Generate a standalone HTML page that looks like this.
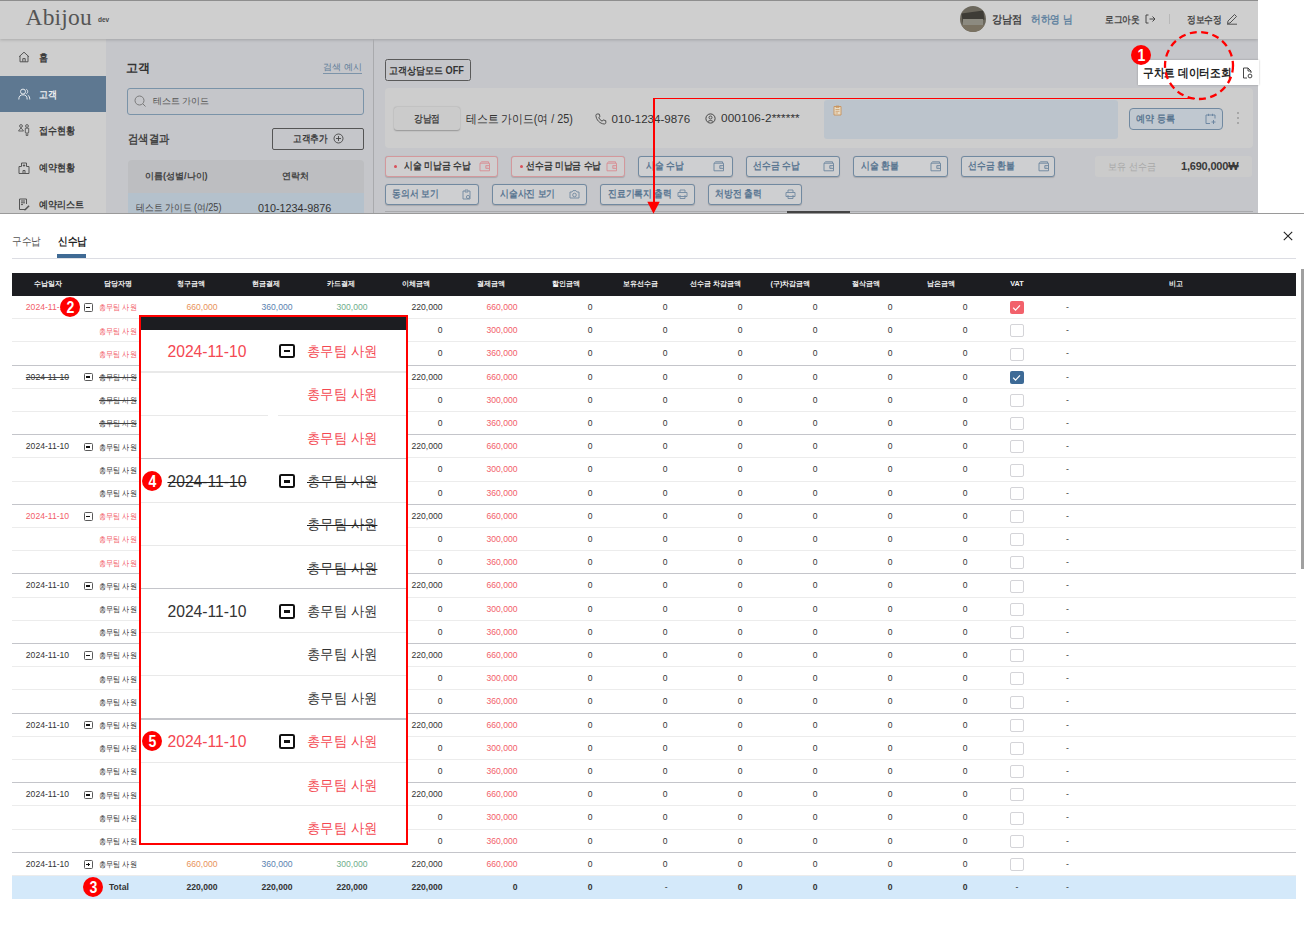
<!DOCTYPE html><html><head><meta charset="utf-8"><style>

*{box-sizing:border-box}
html,body{margin:0;padding:0}
body{width:1304px;height:945px;position:relative;overflow:hidden;background:#fff;font-family:"Liberation Sans",sans-serif;color:#222}
.abs{position:absolute}
.t{position:absolute;white-space:nowrap;line-height:1}
.btn{position:absolute;border:1px solid #7189a0;border-radius:3px;background:#c8cacd;color:#5a7691;font-size:10.5px;font-weight:bold;white-space:nowrap;line-height:1}
.btn span{position:absolute;top:50%;transform:translateY(-50%)}
.row{position:absolute;left:12px;width:1284px;height:23.2px}
.c{position:absolute;top:0;height:23.2px;line-height:23.2px;font-size:8.6px;white-space:nowrap;color:#333}
.r{text-align:right}
.ctr{text-align:center}
.red{color:#f2606a}
.cal .red{color:#f44852}
.org{color:#e8925a}
.blu{color:#5b82b0}
.grn{color:#6fae8c}
.strike{text-decoration:line-through;text-decoration-thickness:0.7px;text-decoration-color:#444}
.badge{position:absolute;width:20px;height:20px;border-radius:50%;background:#ff0000;color:#fff;font-weight:bold;font-size:16px;line-height:22px;text-align:center;font-family:"Liberation Sans",sans-serif}

</style></head><body>
<div class="abs" style="left:0;top:0;width:1258px;height:213px;background:#c5c6ca;overflow:hidden">
<div class="abs" style="left:0;top:39px;width:106px;height:174px;background:#cecece"></div>
<div class="abs" style="left:0;top:76px;width:106px;height:36px;background:#5e7891"></div>
<div class="t" style="left:38.7px;top:52.61px;font-size:10.2px;font-weight:700;color:#3a3a3a;transform:scaleX(0.9);transform-origin:0 0;">홈</div>
<svg class="abs" style="left:18px;top:50.7px" width="13" height="13"><path d="M1 5.8 L6 1.2 L11 5.8 M2 5 V10.8 H10 V5 M4.8 10.8 V7.6 H7.2 V10.8" fill="none" stroke="#555" stroke-width="1" stroke-linejoin="round"/></svg>
<div class="t" style="left:38.7px;top:89.61px;font-size:10.2px;font-weight:700;color:#eef0f2;transform:scaleX(0.9);transform-origin:0 0;">고객</div>
<svg class="abs" style="left:18px;top:87.7px" width="13" height="13"><circle cx="5" cy="3.6" r="2.5" fill="none" stroke="#e6eaee" stroke-width="1"/><path d="M0.8 11.5 C0.8 8 2.5 6.8 5 6.8 C7.5 6.8 9.2 8 9.2 11.5 M8.3 1.3 C10 1.8 10.3 5 8.3 5.8 M9.8 7.2 C11.2 7.8 11.8 9.5 11.8 11.5" fill="none" stroke="#e6eaee" stroke-width="1"/></svg>
<div class="t" style="left:38.7px;top:126.11px;font-size:10.2px;font-weight:700;color:#3a3a3a;transform:scaleX(0.9);transform-origin:0 0;">접수현황</div>
<svg class="abs" style="left:18px;top:124.2px" width="13" height="13"><circle cx="3" cy="2" r="1.4" fill="none" stroke="#555" stroke-width="0.9"/><path d="M0.5 7 L3 3.8 L5.5 7 Z" fill="none" stroke="#555" stroke-width="0.9"/><circle cx="9" cy="2" r="1.4" fill="none" stroke="#555" stroke-width="0.9"/><path d="M7.3 4.2 H10.7 V8.5 H9.8 V11.5 H8.2 V8.5 H7.3 Z" fill="none" stroke="#555" stroke-width="0.9"/></svg>
<div class="t" style="left:38.7px;top:163.41px;font-size:10.2px;font-weight:700;color:#3a3a3a;transform:scaleX(0.9);transform-origin:0 0;">예약현황</div>
<svg class="abs" style="left:18px;top:161.5px" width="13" height="13"><path d="M1 4.5 H3.5 V1 H8.5 V4.5 H11 V11.5 H1 Z M5 11.5 V8.5 H7 V11.5 M6 2.3 V4.7 M4.8 3.5 H7.2" fill="none" stroke="#555" stroke-width="1"/></svg>
<div class="t" style="left:38.7px;top:200.01px;font-size:10.2px;font-weight:700;color:#3a3a3a;transform:scaleX(0.9);transform-origin:0 0;">예약리스트</div>
<svg class="abs" style="left:18px;top:198.1px" width="13" height="13"><path d="M7.5 11.5 H1.5 V1 H8.5 V6 M3 3 H7 M3 4.8 H7 M3 6.6 H5" fill="none" stroke="#555" stroke-width="1"/><path d="M6.5 11.2 L10.5 7.2 L11.6 8.3 L7.6 12.3 L6.3 12.5 Z" fill="#555"/></svg>
<div class="abs" style="left:0;top:0;width:1258px;height:39px;background:#cfcfcf;border-top:1px solid #8e8e8e;box-shadow:0 1px 3px rgba(0,0,0,0.18)"></div>
<div class="t" style="left:25.5px;top:5.9px;font-family:'Liberation Serif',serif;font-size:23.5px;color:#555;letter-spacing:0.2px">Abijou</div>
<div class="t" style="left:98px;top:16.5px;font-size:6.5px;font-weight:bold;color:#4a4a4a">dev</div>
<div class="abs" style="left:960px;top:6px;width:26px;height:26px;border-radius:50%;overflow:hidden;background:#6b675c"><div class="abs" style="left:2px;top:6px;width:22px;height:9px;background:#3e3c36;transform:rotate(-8deg)"></div><div class="abs" style="left:3px;top:13px;width:20px;height:6px;background:#8c8a80"></div><div class="abs" style="left:0;top:19px;width:26px;height:7px;background:#7a7262"></div></div>
<div class="t" style="left:992px;top:13.94px;font-size:11.2px;font-weight:700;color:#454545;transform:scaleX(0.92);transform-origin:0 0;">강남점</div>
<div class="t" style="left:1030.7px;top:14.27px;font-size:10.5px;font-weight:700;color:#6283a0;transform:scaleX(0.88);transform-origin:0 0;">허하영 님</div>
<div class="t" style="left:1105.3px;top:14.60px;font-size:10px;font-weight:700;color:#484848;transform:scaleX(0.87);transform-origin:0 0;">로그아웃</div>
<svg class="abs" style="left:1145px;top:14px" width="11" height="10"><path d="M3.5 1 H1 V9 H3.5 M4.5 5 H10 M7.5 2.5 L10 5 L7.5 7.5" fill="none" stroke="#444" stroke-width="1"/></svg>
<div class="abs" style="left:1169px;top:14px;width:1px;height:10px;background:#b8b8b8"></div>
<div class="t" style="left:1187.3px;top:14.60px;font-size:10px;font-weight:700;color:#484848;transform:scaleX(0.87);transform-origin:0 0;">정보수정</div>
<svg class="abs" style="left:1226px;top:13px" width="12" height="12"><path d="M1.5 10.5 L2 8 L8.5 1.5 L10.5 3.5 L4 10 Z M1 11.2 H11" fill="none" stroke="#444" stroke-width="0.9"/></svg>
<div class="t" style="left:126px;top:62px;font-size:12px;font-weight:bold;color:#333">고객</div>
<div class="t" style="left:323px;top:63px;font-size:9px;color:#5d7c98;border-bottom:1px solid #7c93a8;padding-bottom:1px">검색 예시</div>
<div class="abs" style="left:127px;top:88px;width:236.7px;height:26.5px;border:1px solid #7a93a8;border-radius:3px"></div>
<svg class="abs" style="left:134px;top:95px" width="13" height="13"><circle cx="5.5" cy="5.5" r="4.5" fill="none" stroke="#7a7a7a" stroke-width="1"/><path d="M8.8 8.8 L11.5 11.5" stroke="#7a7a7a" stroke-width="1"/></svg>
<div class="t" style="left:152.5px;top:97px;font-size:9.2px;color:#555">테스트 가이드</div>
<div class="t" style="left:127.5px;top:133.15px;font-size:11.6px;font-weight:700;color:#444;transform:scaleX(0.86);transform-origin:0 0;">검색결과</div>
<div class="abs" style="left:272px;top:127.5px;width:92px;height:22px;border:1px solid #555;border-radius:2px"></div>
<div class="t" style="left:292.5px;top:133.70px;font-size:10px;font-weight:700;color:#3a3a3a;transform:scaleX(0.86);transform-origin:0 0;">고객추가</div>
<svg class="abs" style="left:333px;top:132.5px" width="11" height="11"><circle cx="5.5" cy="5.5" r="4.5" fill="none" stroke="#444" stroke-width="0.9"/><path d="M5.5 3 V8 M3 5.5 H8" stroke="#444" stroke-width="0.9"/></svg>
<div class="abs" style="left:127.5px;top:160px;width:236px;height:33px;background:#bdbec1;border-radius:4px 4px 0 0"></div>
<div class="t" style="left:145px;top:171.5px;font-size:9.2px;font-weight:bold;color:#444">이름(성별/나이)</div>
<div class="t" style="left:281.5px;top:171.5px;font-size:9.2px;font-weight:bold;color:#444">연락처</div>
<div class="abs" style="left:127.5px;top:193px;width:236px;height:22px;background:#b4c1cc"></div>
<div class="t" style="left:136.2px;top:203.11px;font-size:10.4px;font-weight:400;color:#444;transform:scaleX(0.88);transform-origin:0 0;">테스트 가이드 (여/25)</div>
<div class="t" style="left:258px;top:203px;font-size:10.8px;color:#333">010-1234-9876</div>
<div class="abs" style="left:372.5px;top:39px;width:1.2px;height:174px;background:#a9aaad"></div>
<div class="t" style="left:389px;top:65.71px;font-size:10.2px;font-weight:700;color:#333;transform:scaleX(0.9);transform-origin:0 0;">고객상담모드 OFF</div>
<div class="abs" style="left:384.5px;top:58.5px;width:86px;height:22.5px;border:1px solid #5a5a5a;border-radius:2.5px"></div>
<div class="abs" style="left:385px;top:87.5px;width:868px;height:60.5px;background:#cdcdcd;border-radius:4px"></div>
<div class="abs" style="left:394px;top:107px;width:66px;height:23px;background:#cbcbcb;border-radius:3px;box-shadow:0 0.5px 1.5px rgba(0,0,0,0.28)"></div>
<div class="t" style="left:413.5px;top:113.80px;font-size:10px;font-weight:700;color:#444;transform:scaleX(0.87);transform-origin:0 0;">강남점</div>
<div class="t" style="left:466px;top:112.66px;font-size:12px;font-weight:400;color:#333;transform:scaleX(0.9);transform-origin:0 0;">테스트 가이드(여 / 25)</div>
<svg class="abs" style="left:595px;top:112.5px" width="12" height="12"><path d="M2.2 1 L4.2 1 L5 3.6 L3.7 4.6 C4.4 6.2 5.6 7.4 7.2 8.2 L8.2 6.9 L10.8 7.7 L10.8 9.8 C10.8 10.6 10 11 9.2 11 C4.8 10.6 1.2 7 0.9 2.4 C0.9 1.6 1.4 1 2.2 1 Z" fill="none" stroke="#444" stroke-width="0.9"/></svg>
<div class="t" style="left:611.5px;top:112.6px;font-size:11.6px;color:#333">010-1234-9876</div>
<svg class="abs" style="left:704.5px;top:112.5px" width="11" height="11"><circle cx="5.5" cy="5.5" r="4.6" fill="none" stroke="#444" stroke-width="1"/><circle cx="5.5" cy="4.5" r="1.5" fill="none" stroke="#444" stroke-width="0.9"/><path d="M3 8.6 C3.6 7.2 7.4 7.2 8 8.6" fill="none" stroke="#444" stroke-width="0.9"/></svg>
<div class="t" style="left:721px;top:112.6px;font-size:11.8px;color:#333;letter-spacing:0.1px">000106-2******</div>
<div class="abs" style="left:824px;top:100px;width:294px;height:39px;background:#bcc4cc;border-radius:3px"></div>
<svg class="abs" style="left:833px;top:104.5px" width="9" height="11"><path d="M1 1.5 H8 V10 H1 Z" fill="#e8dcc6" stroke="#c8925a" stroke-width="0.9"/><path d="M3 1 H6 V2.5 H3 Z M2.5 4.5 H6.5 M2.5 6.3 H6.5 M2.5 8 H5" fill="none" stroke="#c8925a" stroke-width="0.7"/></svg>
<div class="abs" style="left:1129px;top:107.5px;width:94px;height:22px;border:1px solid #7189a0;border-radius:4px;background:#c0c8d0"></div>
<div class="t" style="left:1136px;top:113.71px;font-size:10.2px;font-weight:700;color:#5a7691;transform:scaleX(0.9);transform-origin:0 0;">예약 등록</div>
<svg class="abs" style="left:1205px;top:112.5px" width="12" height="12"><path d="M5 10.5 H1 V2 H10 V5.5 M3.5 0.8 V3 M7.5 0.8 V3 M8.5 7 V11 M6.5 9 H10.5" fill="none" stroke="#6a85a0" stroke-width="0.95"/></svg>
<div class="abs" style="left:1237px;top:112px;width:2px;height:2px;background:#9a9a9a;border-radius:50%;box-shadow:0 5px 0 #9a9a9a,0 10px 0 #9a9a9a"></div>
<div class="abs" style="left:384.75px;top:155.8px;width:113.25px;height:21px;border:1px solid #d3989c;border-radius:3px;background:#d0cecf;box-shadow:0 0.5px 1px rgba(0,0,0,0.15)"></div>
<div class="t" style="left:403.75px;top:161.41px;font-size:10.4px;font-weight:700;color:#3a3a3a;transform:scaleX(0.875);transform-origin:0 0;">시술 미납금 수납</div>
<svg class="abs" style="left:479px;top:161px" width="12" height="11"><path d="M1 2.2 H10.5 V9.8 H1 Z M1.2 2.2 L2.6 0.8 H9.5 V2.2 M6.8 4.6 H10.5 V7.4 H6.8 Z" fill="none" stroke="#d88f95" stroke-width="0.95"/><circle cx="8" cy="6" r="0.5" fill="#d88f95"/></svg>
<div class="abs" style="left:511.25px;top:155.8px;width:113.5px;height:21px;border:1px solid #d3989c;border-radius:3px;background:#d0cecf;box-shadow:0 0.5px 1px rgba(0,0,0,0.15)"></div>
<div class="t" style="left:525.5px;top:161.41px;font-size:10.4px;font-weight:700;color:#3a3a3a;transform:scaleX(0.875);transform-origin:0 0;">선수금 미납금 수납</div>
<svg class="abs" style="left:605.5px;top:161px" width="12" height="11"><path d="M1 2.2 H10.5 V9.8 H1 Z M1.2 2.2 L2.6 0.8 H9.5 V2.2 M6.8 4.6 H10.5 V7.4 H6.8 Z" fill="none" stroke="#d88f95" stroke-width="0.95"/><circle cx="8" cy="6" r="0.5" fill="#d88f95"/></svg>
<div class="abs" style="left:638px;top:155.8px;width:94.5px;height:21px;border:1px solid #7189a0;border-radius:3px;background:#cecfd1;box-shadow:0 0.5px 1px rgba(0,0,0,0.15)"></div>
<div class="t" style="left:645.5px;top:161.41px;font-size:10.4px;font-weight:700;color:#5a7691;transform:scaleX(0.875);transform-origin:0 0;">시술 수납</div>
<svg class="abs" style="left:713px;top:161px" width="12" height="11"><path d="M1 2.2 H10.5 V9.8 H1 Z M1.2 2.2 L2.6 0.8 H9.5 V2.2 M6.8 4.6 H10.5 V7.4 H6.8 Z" fill="none" stroke="#7189a0" stroke-width="0.95"/><circle cx="8" cy="6" r="0.5" fill="#7189a0"/></svg>
<div class="abs" style="left:745.5px;top:155.8px;width:94.5px;height:21px;border:1px solid #7189a0;border-radius:3px;background:#cecfd1;box-shadow:0 0.5px 1px rgba(0,0,0,0.15)"></div>
<div class="t" style="left:752.5px;top:161.41px;font-size:10.4px;font-weight:700;color:#5a7691;transform:scaleX(0.875);transform-origin:0 0;">선수금 수납</div>
<svg class="abs" style="left:822.5px;top:161px" width="12" height="11"><path d="M1 2.2 H10.5 V9.8 H1 Z M1.2 2.2 L2.6 0.8 H9.5 V2.2 M6.8 4.6 H10.5 V7.4 H6.8 Z" fill="none" stroke="#7189a0" stroke-width="0.95"/><circle cx="8" cy="6" r="0.5" fill="#7189a0"/></svg>
<div class="abs" style="left:853px;top:155.8px;width:94.5px;height:21px;border:1px solid #7189a0;border-radius:3px;background:#cecfd1;box-shadow:0 0.5px 1px rgba(0,0,0,0.15)"></div>
<div class="t" style="left:860.75px;top:161.41px;font-size:10.4px;font-weight:700;color:#5a7691;transform:scaleX(0.875);transform-origin:0 0;">시술 환불</div>
<svg class="abs" style="left:930px;top:161px" width="12" height="11"><path d="M1 2.2 H10.5 V9.8 H1 Z M1.2 2.2 L2.6 0.8 H9.5 V2.2 M6.8 4.6 H10.5 V7.4 H6.8 Z" fill="none" stroke="#7189a0" stroke-width="0.95"/><circle cx="8" cy="6" r="0.5" fill="#7189a0"/></svg>
<div class="abs" style="left:961px;top:155.8px;width:94.40000000000009px;height:21px;border:1px solid #7189a0;border-radius:3px;background:#cecfd1;box-shadow:0 0.5px 1px rgba(0,0,0,0.15)"></div>
<div class="t" style="left:968px;top:161.41px;font-size:10.4px;font-weight:700;color:#5a7691;transform:scaleX(0.875);transform-origin:0 0;">선수금 환불</div>
<svg class="abs" style="left:1038px;top:161px" width="12" height="11"><path d="M1 2.2 H10.5 V9.8 H1 Z M1.2 2.2 L2.6 0.8 H9.5 V2.2 M6.8 4.6 H10.5 V7.4 H6.8 Z" fill="none" stroke="#7189a0" stroke-width="0.95"/><circle cx="8" cy="6" r="0.5" fill="#7189a0"/></svg>
<div class="abs" style="left:394px;top:164.5px;width:3.2px;height:3.2px;border-radius:50%;background:#d9505a"></div>
<div class="abs" style="left:520px;top:164.5px;width:3.2px;height:3.2px;border-radius:50%;background:#d9505a"></div>
<div class="abs" style="left:1095px;top:155.8px;width:157px;height:21px;background:#cbcbcb;border-radius:3px"></div>
<div class="t" style="left:1108px;top:161.60px;font-size:10px;font-weight:400;color:#a8a8a8;transform:scaleX(0.9);transform-origin:0 0;">보유 선수금</div>
<div class="t" style="left:1181px;top:160.7px;font-size:11px;font-weight:bold;color:#3a3a3a;letter-spacing:-0.2px">1,690,000₩</div>
<div class="abs" style="left:385px;top:183.5px;width:93.75px;height:21px;border:1px solid #7189a0;border-radius:3px;background:#cecfd1;box-shadow:0 0.5px 1px rgba(0,0,0,0.15)"></div>
<div class="t" style="left:391.75px;top:189.11px;font-size:10.4px;font-weight:700;color:#5a7691;transform:scaleX(0.875);transform-origin:0 0;">동의서 보기</div>
<svg class="abs" style="left:461.75px;top:189px" width="11" height="11"><path d="M2.5 2 H1 V10 H8 V2 H6.5 M3 1 H6 V3 H3 Z" fill="none" stroke="#7189a0" stroke-width="0.9"/><circle cx="6" cy="8" r="1.6" fill="none" stroke="#7189a0" stroke-width="0.9"/></svg>
<div class="abs" style="left:492.25px;top:183.5px;width:94.5px;height:21px;border:1px solid #7189a0;border-radius:3px;background:#cecfd1;box-shadow:0 0.5px 1px rgba(0,0,0,0.15)"></div>
<div class="t" style="left:499.75px;top:189.11px;font-size:10.4px;font-weight:700;color:#5a7691;transform:scaleX(0.875);transform-origin:0 0;">시술사진 보기</div>
<svg class="abs" style="left:569px;top:189px" width="11" height="11"><path d="M1 3 H3 L4 1.6 H7 L8 3 H10 V9 H1 Z" fill="none" stroke="#7189a0" stroke-width="0.9"/><circle cx="5.5" cy="6" r="1.8" fill="none" stroke="#7189a0" stroke-width="0.9"/></svg>
<div class="abs" style="left:600px;top:183.5px;width:94.75px;height:21px;border:1px solid #7189a0;border-radius:3px;background:#cecfd1;box-shadow:0 0.5px 1px rgba(0,0,0,0.15)"></div>
<div class="t" style="left:607.5px;top:189.11px;font-size:10.4px;font-weight:700;color:#5a7691;transform:scaleX(0.875);transform-origin:0 0;">진료기록지 출력</div>
<svg class="abs" style="left:677px;top:189px" width="11" height="11"><path d="M3 3.5 V1 H8 V3.5 M1 3.5 H10 V7.5 H1 Z M3 6 V9.5 H8 V6" fill="none" stroke="#7189a0" stroke-width="0.9"/></svg>
<div class="abs" style="left:707.5px;top:183.5px;width:94.25px;height:21px;border:1px solid #7189a0;border-radius:3px;background:#cecfd1;box-shadow:0 0.5px 1px rgba(0,0,0,0.15)"></div>
<div class="t" style="left:714.5px;top:189.11px;font-size:10.4px;font-weight:700;color:#5a7691;transform:scaleX(0.875);transform-origin:0 0;">처방전 출력</div>
<svg class="abs" style="left:784.5px;top:189px" width="11" height="11"><path d="M3 3.5 V1 H8 V3.5 M1 3.5 H10 V7.5 H1 Z M3 6 V9.5 H8 V6" fill="none" stroke="#7189a0" stroke-width="0.9"/></svg>
<div class="abs" style="left:385px;top:211px;width:868px;height:1px;background:#a9aaad"></div>
<div class="abs" style="left:787px;top:211px;width:63px;height:2px;background:#444"></div>
</div>
<div class="abs" style="left:0;top:212.5px;width:1304px;height:1px;background:#9a9a9a"></div>
<div class="t" style="left:12px;top:235.87px;font-size:10.5px;font-weight:400;color:#555;transform:scaleX(0.875);transform-origin:0 0;">구수납</div>
<div class="t" style="left:57.5px;top:235.87px;font-size:10.5px;font-weight:700;color:#222;transform:scaleX(0.875);transform-origin:0 0;">신수납</div>
<div class="abs" style="left:12px;top:258.2px;width:1284px;height:1.2px;background:#dcdde3"></div>
<div class="abs" style="left:57px;top:254px;width:29px;height:4px;background:#3f6a94"></div>
<svg class="abs" style="left:1283px;top:230.5px" width="10" height="10"><path d="M0.8 0.8 L9.2 9.2 M9.2 0.8 L0.8 9.2" stroke="#222" stroke-width="1.1"/></svg>
<div class="abs" style="left:1301px;top:269px;width:3px;height:300px;background:#a0a0a0"></div>
<div class="abs" style="left:12px;top:272.8px;width:1284px;height:23.2px;background:#1c1d21"></div>
<div class="t" style="left:-12.5px;width:120px;text-align:center;top:272.10px;line-height:23.2px;font-size:7.3px;font-weight:bold;color:#f4f4f4">수납일자</div>
<div class="t" style="left:58.0px;width:120px;text-align:center;top:272.10px;line-height:23.2px;font-size:7.3px;font-weight:bold;color:#f4f4f4">담당자명</div>
<div class="t" style="left:130.5px;width:120px;text-align:center;top:272.10px;line-height:23.2px;font-size:7.3px;font-weight:bold;color:#f4f4f4">청구금액</div>
<div class="t" style="left:205.5px;width:120px;text-align:center;top:272.10px;line-height:23.2px;font-size:7.3px;font-weight:bold;color:#f4f4f4">현금결제</div>
<div class="t" style="left:280.5px;width:120px;text-align:center;top:272.10px;line-height:23.2px;font-size:7.3px;font-weight:bold;color:#f4f4f4">카드결제</div>
<div class="t" style="left:355.5px;width:120px;text-align:center;top:272.10px;line-height:23.2px;font-size:7.3px;font-weight:bold;color:#f4f4f4">이체금액</div>
<div class="t" style="left:430.5px;width:120px;text-align:center;top:272.10px;line-height:23.2px;font-size:7.3px;font-weight:bold;color:#f4f4f4">결제금액</div>
<div class="t" style="left:505.5px;width:120px;text-align:center;top:272.10px;line-height:23.2px;font-size:7.3px;font-weight:bold;color:#f4f4f4">할인금액</div>
<div class="t" style="left:580.5px;width:120px;text-align:center;top:272.10px;line-height:23.2px;font-size:7.3px;font-weight:bold;color:#f4f4f4">보유선수금</div>
<div class="t" style="left:655.5px;width:120px;text-align:center;top:272.10px;line-height:23.2px;font-size:7.3px;font-weight:bold;color:#f4f4f4">선수금 차감금액</div>
<div class="t" style="left:730.5px;width:120px;text-align:center;top:272.10px;line-height:23.2px;font-size:7.3px;font-weight:bold;color:#f4f4f4">(구)차감금액</div>
<div class="t" style="left:805.5px;width:120px;text-align:center;top:272.10px;line-height:23.2px;font-size:7.3px;font-weight:bold;color:#f4f4f4">절삭금액</div>
<div class="t" style="left:880.5px;width:120px;text-align:center;top:272.10px;line-height:23.2px;font-size:7.3px;font-weight:bold;color:#f4f4f4">남은금액</div>
<div class="t" style="left:957.0px;width:120px;text-align:center;top:272.10px;line-height:23.2px;font-size:7.3px;font-weight:bold;color:#f4f4f4">VAT</div>
<div class="t" style="left:1116.0px;width:120px;text-align:center;top:272.10px;line-height:23.2px;font-size:7.3px;font-weight:bold;color:#f4f4f4">비고</div>
<div class="abs" style="left:12px;top:318.20px;width:1284px;height:1px;background:#ececec"></div>
<div class="c red" style="left:12px;width:71px;text-align:center;top:296.00px;">2024-11-10</div>
<div class="abs" style="left:83.8px;top:303.4px;width:9.2px;height:8.46px;border:1.2px solid #5a5a5a;border-radius:1.38px;background:#fff"></div><div class="abs" style="left:86.47px;top:306.85px;width:3.86px;height:1.56px;background:#111"></div>
<div class="c red" style="left:98.8px;top:296.30px;font-size:8.3px;transform:scaleX(0.89);transform-origin:0 0">총무팀 사원</div>
<div class="c org" style="left:153px;width:64.5px;text-align:right;top:296.00px;">660,000</div>
<div class="c blu" style="left:228px;width:64.5px;text-align:right;top:296.00px;">360,000</div>
<div class="c grn" style="left:303px;width:64.5px;text-align:right;top:296.00px;">300,000</div>
<div class="c " style="left:378px;width:64.5px;text-align:right;top:296.00px;">220,000</div>
<div class="c red" style="left:453px;width:64.5px;text-align:right;top:296.00px;">660,000</div>
<div class="c " style="left:528px;width:64.5px;text-align:right;top:296.00px;">0</div>
<div class="c " style="left:603px;width:64.5px;text-align:right;top:296.00px;">0</div>
<div class="c " style="left:678px;width:64.5px;text-align:right;top:296.00px;">0</div>
<div class="c " style="left:753px;width:64.5px;text-align:right;top:296.00px;">0</div>
<div class="c " style="left:828px;width:64.5px;text-align:right;top:296.00px;">0</div>
<div class="c " style="left:903px;width:64.5px;text-align:right;top:296.00px;">0</div>
<div class="abs" style="left:1010px;top:301.1px;width:13.5px;height:13px;background:#f2616b;border-radius:2px"><svg width="13" height="13" style="position:absolute;left:0;top:0"><path d="M3.2 6.8 L5.6 9.1 L10 4.3" fill="none" stroke="#fff" stroke-width="1.2"/></svg></div>
<div class="c" style="left:1066px;top:296.00px">-</div>
<div class="abs" style="left:12px;top:341.40px;width:1284px;height:1px;background:#ececec"></div>
<div class="c red" style="left:98.8px;top:319.50px;font-size:8.3px;transform:scaleX(0.89);transform-origin:0 0">총무팀 사원</div>
<div class="c " style="left:378px;width:64.5px;text-align:right;top:319.20px;">0</div>
<div class="c red" style="left:453px;width:64.5px;text-align:right;top:319.20px;">300,000</div>
<div class="c " style="left:528px;width:64.5px;text-align:right;top:319.20px;">0</div>
<div class="c " style="left:603px;width:64.5px;text-align:right;top:319.20px;">0</div>
<div class="c " style="left:678px;width:64.5px;text-align:right;top:319.20px;">0</div>
<div class="c " style="left:753px;width:64.5px;text-align:right;top:319.20px;">0</div>
<div class="c " style="left:828px;width:64.5px;text-align:right;top:319.20px;">0</div>
<div class="c " style="left:903px;width:64.5px;text-align:right;top:319.20px;">0</div>
<div class="abs" style="left:1010px;top:324.3px;width:13.5px;height:13px;border:1px solid #d4d4d8;border-radius:2px;background:#fff"></div>
<div class="c" style="left:1066px;top:319.20px">-</div>
<div class="abs" style="left:12px;top:364.50px;width:1284px;height:1.1px;background:#c4c5ca"></div>
<div class="c red" style="left:98.8px;top:342.70px;font-size:8.3px;transform:scaleX(0.89);transform-origin:0 0">총무팀 사원</div>
<div class="c " style="left:378px;width:64.5px;text-align:right;top:342.40px;">0</div>
<div class="c red" style="left:453px;width:64.5px;text-align:right;top:342.40px;">360,000</div>
<div class="c " style="left:528px;width:64.5px;text-align:right;top:342.40px;">0</div>
<div class="c " style="left:603px;width:64.5px;text-align:right;top:342.40px;">0</div>
<div class="c " style="left:678px;width:64.5px;text-align:right;top:342.40px;">0</div>
<div class="c " style="left:753px;width:64.5px;text-align:right;top:342.40px;">0</div>
<div class="c " style="left:828px;width:64.5px;text-align:right;top:342.40px;">0</div>
<div class="c " style="left:903px;width:64.5px;text-align:right;top:342.40px;">0</div>
<div class="abs" style="left:1010px;top:347.5px;width:13.5px;height:13px;border:1px solid #d4d4d8;border-radius:2px;background:#fff"></div>
<div class="c" style="left:1066px;top:342.40px">-</div>
<div class="abs" style="left:12px;top:387.80px;width:1284px;height:1px;background:#ececec"></div>
<div class="c strike" style="left:12px;width:71px;text-align:center;top:365.60px;">2024-11-10</div>
<div class="abs" style="left:83.8px;top:372.99999999999994px;width:9.2px;height:8.46px;border:1.2px solid #5a5a5a;border-radius:1.38px;background:#fff"></div><div class="abs" style="left:86.47px;top:376.45px;width:3.86px;height:1.56px;background:#111"></div>
<div class="c strike" style="left:98.8px;top:365.90px;font-size:8.3px;transform:scaleX(0.89);transform-origin:0 0">총무팀 사원</div>
<div class="c " style="left:378px;width:64.5px;text-align:right;top:365.60px;">220,000</div>
<div class="c red" style="left:453px;width:64.5px;text-align:right;top:365.60px;">660,000</div>
<div class="c " style="left:528px;width:64.5px;text-align:right;top:365.60px;">0</div>
<div class="c " style="left:603px;width:64.5px;text-align:right;top:365.60px;">0</div>
<div class="c " style="left:678px;width:64.5px;text-align:right;top:365.60px;">0</div>
<div class="c " style="left:753px;width:64.5px;text-align:right;top:365.60px;">0</div>
<div class="c " style="left:828px;width:64.5px;text-align:right;top:365.60px;">0</div>
<div class="c " style="left:903px;width:64.5px;text-align:right;top:365.60px;">0</div>
<div class="abs" style="left:1010px;top:370.7px;width:13.5px;height:13px;background:#3d6a96;border-radius:2px"><svg width="13" height="13" style="position:absolute;left:0;top:0"><path d="M3.2 6.8 L5.6 9.1 L10 4.3" fill="none" stroke="#fff" stroke-width="1.2"/></svg></div>
<div class="c" style="left:1066px;top:365.60px">-</div>
<div class="abs" style="left:12px;top:411.00px;width:1284px;height:1px;background:#ececec"></div>
<div class="c strike" style="left:98.8px;top:389.10px;font-size:8.3px;transform:scaleX(0.89);transform-origin:0 0">총무팀 사원</div>
<div class="c " style="left:378px;width:64.5px;text-align:right;top:388.80px;">0</div>
<div class="c red" style="left:453px;width:64.5px;text-align:right;top:388.80px;">300,000</div>
<div class="c " style="left:528px;width:64.5px;text-align:right;top:388.80px;">0</div>
<div class="c " style="left:603px;width:64.5px;text-align:right;top:388.80px;">0</div>
<div class="c " style="left:678px;width:64.5px;text-align:right;top:388.80px;">0</div>
<div class="c " style="left:753px;width:64.5px;text-align:right;top:388.80px;">0</div>
<div class="c " style="left:828px;width:64.5px;text-align:right;top:388.80px;">0</div>
<div class="c " style="left:903px;width:64.5px;text-align:right;top:388.80px;">0</div>
<div class="abs" style="left:1010px;top:393.9px;width:13.5px;height:13px;border:1px solid #d4d4d8;border-radius:2px;background:#fff"></div>
<div class="c" style="left:1066px;top:388.80px">-</div>
<div class="abs" style="left:12px;top:434.10px;width:1284px;height:1.1px;background:#c4c5ca"></div>
<div class="c strike" style="left:98.8px;top:412.30px;font-size:8.3px;transform:scaleX(0.89);transform-origin:0 0">총무팀 사원</div>
<div class="c " style="left:378px;width:64.5px;text-align:right;top:412.00px;">0</div>
<div class="c red" style="left:453px;width:64.5px;text-align:right;top:412.00px;">360,000</div>
<div class="c " style="left:528px;width:64.5px;text-align:right;top:412.00px;">0</div>
<div class="c " style="left:603px;width:64.5px;text-align:right;top:412.00px;">0</div>
<div class="c " style="left:678px;width:64.5px;text-align:right;top:412.00px;">0</div>
<div class="c " style="left:753px;width:64.5px;text-align:right;top:412.00px;">0</div>
<div class="c " style="left:828px;width:64.5px;text-align:right;top:412.00px;">0</div>
<div class="c " style="left:903px;width:64.5px;text-align:right;top:412.00px;">0</div>
<div class="abs" style="left:1010px;top:417.09999999999997px;width:13.5px;height:13px;border:1px solid #d4d4d8;border-radius:2px;background:#fff"></div>
<div class="c" style="left:1066px;top:412.00px">-</div>
<div class="abs" style="left:12px;top:457.40px;width:1284px;height:1px;background:#ececec"></div>
<div class="c " style="left:12px;width:71px;text-align:center;top:435.20px;">2024-11-10</div>
<div class="abs" style="left:83.8px;top:442.5999999999999px;width:9.2px;height:8.46px;border:1.2px solid #5a5a5a;border-radius:1.38px;background:#fff"></div><div class="abs" style="left:86.47px;top:446.05px;width:3.86px;height:1.56px;background:#111"></div>
<div class="c " style="left:98.8px;top:435.50px;font-size:8.3px;transform:scaleX(0.89);transform-origin:0 0">총무팀 사원</div>
<div class="c " style="left:378px;width:64.5px;text-align:right;top:435.20px;">220,000</div>
<div class="c red" style="left:453px;width:64.5px;text-align:right;top:435.20px;">660,000</div>
<div class="c " style="left:528px;width:64.5px;text-align:right;top:435.20px;">0</div>
<div class="c " style="left:603px;width:64.5px;text-align:right;top:435.20px;">0</div>
<div class="c " style="left:678px;width:64.5px;text-align:right;top:435.20px;">0</div>
<div class="c " style="left:753px;width:64.5px;text-align:right;top:435.20px;">0</div>
<div class="c " style="left:828px;width:64.5px;text-align:right;top:435.20px;">0</div>
<div class="c " style="left:903px;width:64.5px;text-align:right;top:435.20px;">0</div>
<div class="abs" style="left:1010px;top:440.29999999999995px;width:13.5px;height:13px;border:1px solid #d4d4d8;border-radius:2px;background:#fff"></div>
<div class="c" style="left:1066px;top:435.20px">-</div>
<div class="abs" style="left:12px;top:480.60px;width:1284px;height:1px;background:#ececec"></div>
<div class="c " style="left:98.8px;top:458.70px;font-size:8.3px;transform:scaleX(0.89);transform-origin:0 0">총무팀 사원</div>
<div class="c " style="left:378px;width:64.5px;text-align:right;top:458.40px;">0</div>
<div class="c red" style="left:453px;width:64.5px;text-align:right;top:458.40px;">300,000</div>
<div class="c " style="left:528px;width:64.5px;text-align:right;top:458.40px;">0</div>
<div class="c " style="left:603px;width:64.5px;text-align:right;top:458.40px;">0</div>
<div class="c " style="left:678px;width:64.5px;text-align:right;top:458.40px;">0</div>
<div class="c " style="left:753px;width:64.5px;text-align:right;top:458.40px;">0</div>
<div class="c " style="left:828px;width:64.5px;text-align:right;top:458.40px;">0</div>
<div class="c " style="left:903px;width:64.5px;text-align:right;top:458.40px;">0</div>
<div class="abs" style="left:1010px;top:463.49999999999994px;width:13.5px;height:13px;border:1px solid #d4d4d8;border-radius:2px;background:#fff"></div>
<div class="c" style="left:1066px;top:458.40px">-</div>
<div class="abs" style="left:12px;top:503.70px;width:1284px;height:1.1px;background:#c4c5ca"></div>
<div class="c " style="left:98.8px;top:481.90px;font-size:8.3px;transform:scaleX(0.89);transform-origin:0 0">총무팀 사원</div>
<div class="c " style="left:378px;width:64.5px;text-align:right;top:481.60px;">0</div>
<div class="c red" style="left:453px;width:64.5px;text-align:right;top:481.60px;">360,000</div>
<div class="c " style="left:528px;width:64.5px;text-align:right;top:481.60px;">0</div>
<div class="c " style="left:603px;width:64.5px;text-align:right;top:481.60px;">0</div>
<div class="c " style="left:678px;width:64.5px;text-align:right;top:481.60px;">0</div>
<div class="c " style="left:753px;width:64.5px;text-align:right;top:481.60px;">0</div>
<div class="c " style="left:828px;width:64.5px;text-align:right;top:481.60px;">0</div>
<div class="c " style="left:903px;width:64.5px;text-align:right;top:481.60px;">0</div>
<div class="abs" style="left:1010px;top:486.69999999999993px;width:13.5px;height:13px;border:1px solid #d4d4d8;border-radius:2px;background:#fff"></div>
<div class="c" style="left:1066px;top:481.60px">-</div>
<div class="abs" style="left:12px;top:527.00px;width:1284px;height:1px;background:#ececec"></div>
<div class="c red" style="left:12px;width:71px;text-align:center;top:504.80px;">2024-11-10</div>
<div class="abs" style="left:83.8px;top:512.1999999999999px;width:9.2px;height:8.46px;border:1.2px solid #5a5a5a;border-radius:1.38px;background:#fff"></div><div class="abs" style="left:86.47px;top:515.65px;width:3.86px;height:1.56px;background:#111"></div>
<div class="c red" style="left:98.8px;top:505.10px;font-size:8.3px;transform:scaleX(0.89);transform-origin:0 0">총무팀 사원</div>
<div class="c " style="left:378px;width:64.5px;text-align:right;top:504.80px;">220,000</div>
<div class="c red" style="left:453px;width:64.5px;text-align:right;top:504.80px;">660,000</div>
<div class="c " style="left:528px;width:64.5px;text-align:right;top:504.80px;">0</div>
<div class="c " style="left:603px;width:64.5px;text-align:right;top:504.80px;">0</div>
<div class="c " style="left:678px;width:64.5px;text-align:right;top:504.80px;">0</div>
<div class="c " style="left:753px;width:64.5px;text-align:right;top:504.80px;">0</div>
<div class="c " style="left:828px;width:64.5px;text-align:right;top:504.80px;">0</div>
<div class="c " style="left:903px;width:64.5px;text-align:right;top:504.80px;">0</div>
<div class="abs" style="left:1010px;top:509.8999999999999px;width:13.5px;height:13px;border:1px solid #d4d4d8;border-radius:2px;background:#fff"></div>
<div class="c" style="left:1066px;top:504.80px">-</div>
<div class="abs" style="left:12px;top:550.20px;width:1284px;height:1px;background:#ececec"></div>
<div class="c red" style="left:98.8px;top:528.30px;font-size:8.3px;transform:scaleX(0.89);transform-origin:0 0">총무팀 사원</div>
<div class="c " style="left:378px;width:64.5px;text-align:right;top:528.00px;">0</div>
<div class="c red" style="left:453px;width:64.5px;text-align:right;top:528.00px;">300,000</div>
<div class="c " style="left:528px;width:64.5px;text-align:right;top:528.00px;">0</div>
<div class="c " style="left:603px;width:64.5px;text-align:right;top:528.00px;">0</div>
<div class="c " style="left:678px;width:64.5px;text-align:right;top:528.00px;">0</div>
<div class="c " style="left:753px;width:64.5px;text-align:right;top:528.00px;">0</div>
<div class="c " style="left:828px;width:64.5px;text-align:right;top:528.00px;">0</div>
<div class="c " style="left:903px;width:64.5px;text-align:right;top:528.00px;">0</div>
<div class="abs" style="left:1010px;top:533.0999999999999px;width:13.5px;height:13px;border:1px solid #d4d4d8;border-radius:2px;background:#fff"></div>
<div class="c" style="left:1066px;top:528.00px">-</div>
<div class="abs" style="left:12px;top:573.30px;width:1284px;height:1.1px;background:#c4c5ca"></div>
<div class="c red" style="left:98.8px;top:551.50px;font-size:8.3px;transform:scaleX(0.89);transform-origin:0 0">총무팀 사원</div>
<div class="c " style="left:378px;width:64.5px;text-align:right;top:551.20px;">0</div>
<div class="c red" style="left:453px;width:64.5px;text-align:right;top:551.20px;">360,000</div>
<div class="c " style="left:528px;width:64.5px;text-align:right;top:551.20px;">0</div>
<div class="c " style="left:603px;width:64.5px;text-align:right;top:551.20px;">0</div>
<div class="c " style="left:678px;width:64.5px;text-align:right;top:551.20px;">0</div>
<div class="c " style="left:753px;width:64.5px;text-align:right;top:551.20px;">0</div>
<div class="c " style="left:828px;width:64.5px;text-align:right;top:551.20px;">0</div>
<div class="c " style="left:903px;width:64.5px;text-align:right;top:551.20px;">0</div>
<div class="abs" style="left:1010px;top:556.3px;width:13.5px;height:13px;border:1px solid #d4d4d8;border-radius:2px;background:#fff"></div>
<div class="c" style="left:1066px;top:551.20px">-</div>
<div class="abs" style="left:12px;top:596.60px;width:1284px;height:1px;background:#ececec"></div>
<div class="c " style="left:12px;width:71px;text-align:center;top:574.40px;">2024-11-10</div>
<div class="abs" style="left:83.8px;top:581.8px;width:9.2px;height:8.46px;border:1.2px solid #5a5a5a;border-radius:1.38px;background:#fff"></div><div class="abs" style="left:86.47px;top:585.25px;width:3.86px;height:1.56px;background:#111"></div>
<div class="c " style="left:98.8px;top:574.70px;font-size:8.3px;transform:scaleX(0.89);transform-origin:0 0">총무팀 사원</div>
<div class="c " style="left:378px;width:64.5px;text-align:right;top:574.40px;">220,000</div>
<div class="c red" style="left:453px;width:64.5px;text-align:right;top:574.40px;">660,000</div>
<div class="c " style="left:528px;width:64.5px;text-align:right;top:574.40px;">0</div>
<div class="c " style="left:603px;width:64.5px;text-align:right;top:574.40px;">0</div>
<div class="c " style="left:678px;width:64.5px;text-align:right;top:574.40px;">0</div>
<div class="c " style="left:753px;width:64.5px;text-align:right;top:574.40px;">0</div>
<div class="c " style="left:828px;width:64.5px;text-align:right;top:574.40px;">0</div>
<div class="c " style="left:903px;width:64.5px;text-align:right;top:574.40px;">0</div>
<div class="abs" style="left:1010px;top:579.5px;width:13.5px;height:13px;border:1px solid #d4d4d8;border-radius:2px;background:#fff"></div>
<div class="c" style="left:1066px;top:574.40px">-</div>
<div class="abs" style="left:12px;top:619.80px;width:1284px;height:1px;background:#ececec"></div>
<div class="c " style="left:98.8px;top:597.90px;font-size:8.3px;transform:scaleX(0.89);transform-origin:0 0">총무팀 사원</div>
<div class="c " style="left:378px;width:64.5px;text-align:right;top:597.60px;">0</div>
<div class="c red" style="left:453px;width:64.5px;text-align:right;top:597.60px;">300,000</div>
<div class="c " style="left:528px;width:64.5px;text-align:right;top:597.60px;">0</div>
<div class="c " style="left:603px;width:64.5px;text-align:right;top:597.60px;">0</div>
<div class="c " style="left:678px;width:64.5px;text-align:right;top:597.60px;">0</div>
<div class="c " style="left:753px;width:64.5px;text-align:right;top:597.60px;">0</div>
<div class="c " style="left:828px;width:64.5px;text-align:right;top:597.60px;">0</div>
<div class="c " style="left:903px;width:64.5px;text-align:right;top:597.60px;">0</div>
<div class="abs" style="left:1010px;top:602.7px;width:13.5px;height:13px;border:1px solid #d4d4d8;border-radius:2px;background:#fff"></div>
<div class="c" style="left:1066px;top:597.60px">-</div>
<div class="abs" style="left:12px;top:642.90px;width:1284px;height:1.1px;background:#c4c5ca"></div>
<div class="c " style="left:98.8px;top:621.10px;font-size:8.3px;transform:scaleX(0.89);transform-origin:0 0">총무팀 사원</div>
<div class="c " style="left:378px;width:64.5px;text-align:right;top:620.80px;">0</div>
<div class="c red" style="left:453px;width:64.5px;text-align:right;top:620.80px;">360,000</div>
<div class="c " style="left:528px;width:64.5px;text-align:right;top:620.80px;">0</div>
<div class="c " style="left:603px;width:64.5px;text-align:right;top:620.80px;">0</div>
<div class="c " style="left:678px;width:64.5px;text-align:right;top:620.80px;">0</div>
<div class="c " style="left:753px;width:64.5px;text-align:right;top:620.80px;">0</div>
<div class="c " style="left:828px;width:64.5px;text-align:right;top:620.80px;">0</div>
<div class="c " style="left:903px;width:64.5px;text-align:right;top:620.80px;">0</div>
<div class="abs" style="left:1010px;top:625.9000000000001px;width:13.5px;height:13px;border:1px solid #d4d4d8;border-radius:2px;background:#fff"></div>
<div class="c" style="left:1066px;top:620.80px">-</div>
<div class="abs" style="left:12px;top:666.20px;width:1284px;height:1px;background:#ececec"></div>
<div class="c " style="left:12px;width:71px;text-align:center;top:644.00px;">2024-11-10</div>
<div class="abs" style="left:83.8px;top:651.4000000000001px;width:9.2px;height:8.46px;border:1.2px solid #5a5a5a;border-radius:1.38px;background:#fff"></div><div class="abs" style="left:86.47px;top:654.85px;width:3.86px;height:1.56px;background:#111"></div>
<div class="c " style="left:98.8px;top:644.30px;font-size:8.3px;transform:scaleX(0.89);transform-origin:0 0">총무팀 사원</div>
<div class="c " style="left:378px;width:64.5px;text-align:right;top:644.00px;">220,000</div>
<div class="c red" style="left:453px;width:64.5px;text-align:right;top:644.00px;">660,000</div>
<div class="c " style="left:528px;width:64.5px;text-align:right;top:644.00px;">0</div>
<div class="c " style="left:603px;width:64.5px;text-align:right;top:644.00px;">0</div>
<div class="c " style="left:678px;width:64.5px;text-align:right;top:644.00px;">0</div>
<div class="c " style="left:753px;width:64.5px;text-align:right;top:644.00px;">0</div>
<div class="c " style="left:828px;width:64.5px;text-align:right;top:644.00px;">0</div>
<div class="c " style="left:903px;width:64.5px;text-align:right;top:644.00px;">0</div>
<div class="abs" style="left:1010px;top:649.1000000000001px;width:13.5px;height:13px;border:1px solid #d4d4d8;border-radius:2px;background:#fff"></div>
<div class="c" style="left:1066px;top:644.00px">-</div>
<div class="abs" style="left:12px;top:689.40px;width:1284px;height:1px;background:#ececec"></div>
<div class="c " style="left:98.8px;top:667.50px;font-size:8.3px;transform:scaleX(0.89);transform-origin:0 0">총무팀 사원</div>
<div class="c " style="left:378px;width:64.5px;text-align:right;top:667.20px;">0</div>
<div class="c red" style="left:453px;width:64.5px;text-align:right;top:667.20px;">300,000</div>
<div class="c " style="left:528px;width:64.5px;text-align:right;top:667.20px;">0</div>
<div class="c " style="left:603px;width:64.5px;text-align:right;top:667.20px;">0</div>
<div class="c " style="left:678px;width:64.5px;text-align:right;top:667.20px;">0</div>
<div class="c " style="left:753px;width:64.5px;text-align:right;top:667.20px;">0</div>
<div class="c " style="left:828px;width:64.5px;text-align:right;top:667.20px;">0</div>
<div class="c " style="left:903px;width:64.5px;text-align:right;top:667.20px;">0</div>
<div class="abs" style="left:1010px;top:672.3000000000002px;width:13.5px;height:13px;border:1px solid #d4d4d8;border-radius:2px;background:#fff"></div>
<div class="c" style="left:1066px;top:667.20px">-</div>
<div class="abs" style="left:12px;top:712.50px;width:1284px;height:1.1px;background:#c4c5ca"></div>
<div class="c " style="left:98.8px;top:690.70px;font-size:8.3px;transform:scaleX(0.89);transform-origin:0 0">총무팀 사원</div>
<div class="c " style="left:378px;width:64.5px;text-align:right;top:690.40px;">0</div>
<div class="c red" style="left:453px;width:64.5px;text-align:right;top:690.40px;">360,000</div>
<div class="c " style="left:528px;width:64.5px;text-align:right;top:690.40px;">0</div>
<div class="c " style="left:603px;width:64.5px;text-align:right;top:690.40px;">0</div>
<div class="c " style="left:678px;width:64.5px;text-align:right;top:690.40px;">0</div>
<div class="c " style="left:753px;width:64.5px;text-align:right;top:690.40px;">0</div>
<div class="c " style="left:828px;width:64.5px;text-align:right;top:690.40px;">0</div>
<div class="c " style="left:903px;width:64.5px;text-align:right;top:690.40px;">0</div>
<div class="abs" style="left:1010px;top:695.5000000000002px;width:13.5px;height:13px;border:1px solid #d4d4d8;border-radius:2px;background:#fff"></div>
<div class="c" style="left:1066px;top:690.40px">-</div>
<div class="abs" style="left:12px;top:735.80px;width:1284px;height:1px;background:#ececec"></div>
<div class="c " style="left:12px;width:71px;text-align:center;top:713.60px;">2024-11-10</div>
<div class="abs" style="left:83.8px;top:721.0000000000002px;width:9.2px;height:8.46px;border:1.2px solid #5a5a5a;border-radius:1.38px;background:#fff"></div><div class="abs" style="left:86.47px;top:724.45px;width:3.86px;height:1.56px;background:#111"></div>
<div class="c " style="left:98.8px;top:713.90px;font-size:8.3px;transform:scaleX(0.89);transform-origin:0 0">총무팀 사원</div>
<div class="c " style="left:378px;width:64.5px;text-align:right;top:713.60px;">220,000</div>
<div class="c red" style="left:453px;width:64.5px;text-align:right;top:713.60px;">660,000</div>
<div class="c " style="left:528px;width:64.5px;text-align:right;top:713.60px;">0</div>
<div class="c " style="left:603px;width:64.5px;text-align:right;top:713.60px;">0</div>
<div class="c " style="left:678px;width:64.5px;text-align:right;top:713.60px;">0</div>
<div class="c " style="left:753px;width:64.5px;text-align:right;top:713.60px;">0</div>
<div class="c " style="left:828px;width:64.5px;text-align:right;top:713.60px;">0</div>
<div class="c " style="left:903px;width:64.5px;text-align:right;top:713.60px;">0</div>
<div class="abs" style="left:1010px;top:718.7000000000003px;width:13.5px;height:13px;border:1px solid #d4d4d8;border-radius:2px;background:#fff"></div>
<div class="c" style="left:1066px;top:713.60px">-</div>
<div class="abs" style="left:12px;top:759.00px;width:1284px;height:1px;background:#ececec"></div>
<div class="c " style="left:98.8px;top:737.10px;font-size:8.3px;transform:scaleX(0.89);transform-origin:0 0">총무팀 사원</div>
<div class="c " style="left:378px;width:64.5px;text-align:right;top:736.80px;">0</div>
<div class="c red" style="left:453px;width:64.5px;text-align:right;top:736.80px;">300,000</div>
<div class="c " style="left:528px;width:64.5px;text-align:right;top:736.80px;">0</div>
<div class="c " style="left:603px;width:64.5px;text-align:right;top:736.80px;">0</div>
<div class="c " style="left:678px;width:64.5px;text-align:right;top:736.80px;">0</div>
<div class="c " style="left:753px;width:64.5px;text-align:right;top:736.80px;">0</div>
<div class="c " style="left:828px;width:64.5px;text-align:right;top:736.80px;">0</div>
<div class="c " style="left:903px;width:64.5px;text-align:right;top:736.80px;">0</div>
<div class="abs" style="left:1010px;top:741.9000000000003px;width:13.5px;height:13px;border:1px solid #d4d4d8;border-radius:2px;background:#fff"></div>
<div class="c" style="left:1066px;top:736.80px">-</div>
<div class="abs" style="left:12px;top:782.10px;width:1284px;height:1.1px;background:#c4c5ca"></div>
<div class="c " style="left:98.8px;top:760.30px;font-size:8.3px;transform:scaleX(0.89);transform-origin:0 0">총무팀 사원</div>
<div class="c " style="left:378px;width:64.5px;text-align:right;top:760.00px;">0</div>
<div class="c red" style="left:453px;width:64.5px;text-align:right;top:760.00px;">360,000</div>
<div class="c " style="left:528px;width:64.5px;text-align:right;top:760.00px;">0</div>
<div class="c " style="left:603px;width:64.5px;text-align:right;top:760.00px;">0</div>
<div class="c " style="left:678px;width:64.5px;text-align:right;top:760.00px;">0</div>
<div class="c " style="left:753px;width:64.5px;text-align:right;top:760.00px;">0</div>
<div class="c " style="left:828px;width:64.5px;text-align:right;top:760.00px;">0</div>
<div class="c " style="left:903px;width:64.5px;text-align:right;top:760.00px;">0</div>
<div class="abs" style="left:1010px;top:765.1000000000004px;width:13.5px;height:13px;border:1px solid #d4d4d8;border-radius:2px;background:#fff"></div>
<div class="c" style="left:1066px;top:760.00px">-</div>
<div class="abs" style="left:12px;top:805.40px;width:1284px;height:1px;background:#ececec"></div>
<div class="c " style="left:12px;width:71px;text-align:center;top:783.20px;">2024-11-10</div>
<div class="abs" style="left:83.8px;top:790.6000000000004px;width:9.2px;height:8.46px;border:1.2px solid #5a5a5a;border-radius:1.38px;background:#fff"></div><div class="abs" style="left:86.47px;top:794.05px;width:3.86px;height:1.56px;background:#111"></div>
<div class="c " style="left:98.8px;top:783.50px;font-size:8.3px;transform:scaleX(0.89);transform-origin:0 0">총무팀 사원</div>
<div class="c " style="left:378px;width:64.5px;text-align:right;top:783.20px;">220,000</div>
<div class="c red" style="left:453px;width:64.5px;text-align:right;top:783.20px;">660,000</div>
<div class="c " style="left:528px;width:64.5px;text-align:right;top:783.20px;">0</div>
<div class="c " style="left:603px;width:64.5px;text-align:right;top:783.20px;">0</div>
<div class="c " style="left:678px;width:64.5px;text-align:right;top:783.20px;">0</div>
<div class="c " style="left:753px;width:64.5px;text-align:right;top:783.20px;">0</div>
<div class="c " style="left:828px;width:64.5px;text-align:right;top:783.20px;">0</div>
<div class="c " style="left:903px;width:64.5px;text-align:right;top:783.20px;">0</div>
<div class="abs" style="left:1010px;top:788.3000000000004px;width:13.5px;height:13px;border:1px solid #d4d4d8;border-radius:2px;background:#fff"></div>
<div class="c" style="left:1066px;top:783.20px">-</div>
<div class="abs" style="left:12px;top:828.60px;width:1284px;height:1px;background:#ececec"></div>
<div class="c " style="left:98.8px;top:806.70px;font-size:8.3px;transform:scaleX(0.89);transform-origin:0 0">총무팀 사원</div>
<div class="c " style="left:378px;width:64.5px;text-align:right;top:806.40px;">0</div>
<div class="c red" style="left:453px;width:64.5px;text-align:right;top:806.40px;">300,000</div>
<div class="c " style="left:528px;width:64.5px;text-align:right;top:806.40px;">0</div>
<div class="c " style="left:603px;width:64.5px;text-align:right;top:806.40px;">0</div>
<div class="c " style="left:678px;width:64.5px;text-align:right;top:806.40px;">0</div>
<div class="c " style="left:753px;width:64.5px;text-align:right;top:806.40px;">0</div>
<div class="c " style="left:828px;width:64.5px;text-align:right;top:806.40px;">0</div>
<div class="c " style="left:903px;width:64.5px;text-align:right;top:806.40px;">0</div>
<div class="abs" style="left:1010px;top:811.5000000000005px;width:13.5px;height:13px;border:1px solid #d4d4d8;border-radius:2px;background:#fff"></div>
<div class="c" style="left:1066px;top:806.40px">-</div>
<div class="abs" style="left:12px;top:851.70px;width:1284px;height:1.1px;background:#c4c5ca"></div>
<div class="c " style="left:98.8px;top:829.90px;font-size:8.3px;transform:scaleX(0.89);transform-origin:0 0">총무팀 사원</div>
<div class="c " style="left:378px;width:64.5px;text-align:right;top:829.60px;">0</div>
<div class="c red" style="left:453px;width:64.5px;text-align:right;top:829.60px;">360,000</div>
<div class="c " style="left:528px;width:64.5px;text-align:right;top:829.60px;">0</div>
<div class="c " style="left:603px;width:64.5px;text-align:right;top:829.60px;">0</div>
<div class="c " style="left:678px;width:64.5px;text-align:right;top:829.60px;">0</div>
<div class="c " style="left:753px;width:64.5px;text-align:right;top:829.60px;">0</div>
<div class="c " style="left:828px;width:64.5px;text-align:right;top:829.60px;">0</div>
<div class="c " style="left:903px;width:64.5px;text-align:right;top:829.60px;">0</div>
<div class="abs" style="left:1010px;top:834.7000000000005px;width:13.5px;height:13px;border:1px solid #d4d4d8;border-radius:2px;background:#fff"></div>
<div class="c" style="left:1066px;top:829.60px">-</div>
<div class="abs" style="left:12px;top:875.00px;width:1284px;height:1px;background:#ececec"></div>
<div class="c " style="left:12px;width:71px;text-align:center;top:852.80px;">2024-11-10</div>
<div class="abs" style="left:83.8px;top:860.2000000000005px;width:9.2px;height:8.46px;border:1.2px solid #5a5a5a;border-radius:1.38px;background:#fff"></div><div class="abs" style="left:86.47px;top:863.65px;width:3.86px;height:1.56px;background:#111"></div><div class="abs" style="left:87.62px;top:862.50px;width:1.56px;height:3.86px;background:#111"></div>
<div class="c" style="left:98.8px;top:853.10px;font-size:8.3px;transform:scaleX(0.89);transform-origin:0 0">총무팀 사원</div>
<div class="c org" style="left:153px;width:64.5px;text-align:right;top:852.80px;">660,000</div>
<div class="c blu" style="left:228px;width:64.5px;text-align:right;top:852.80px;">360,000</div>
<div class="c grn" style="left:303px;width:64.5px;text-align:right;top:852.80px;">300,000</div>
<div class="c " style="left:378px;width:64.5px;text-align:right;top:852.80px;">220,000</div>
<div class="c red" style="left:453px;width:64.5px;text-align:right;top:852.80px;">660,000</div>
<div class="c " style="left:528px;width:64.5px;text-align:right;top:852.80px;">0</div>
<div class="c " style="left:603px;width:64.5px;text-align:right;top:852.80px;">0</div>
<div class="c " style="left:678px;width:64.5px;text-align:right;top:852.80px;">0</div>
<div class="c " style="left:753px;width:64.5px;text-align:right;top:852.80px;">0</div>
<div class="c " style="left:828px;width:64.5px;text-align:right;top:852.80px;">0</div>
<div class="c " style="left:903px;width:64.5px;text-align:right;top:852.80px;">0</div>
<div class="abs" style="left:1010px;top:857.9000000000005px;width:13.5px;height:13px;border:1px solid #d4d4d8;border-radius:2px;background:#fff"></div>
<div class="c" style="left:1066px;top:852.80px">-</div>
<div class="abs" style="left:12px;top:876.00px;width:1284px;height:23.2px;background:#d4e9fa"></div>
<div class="c" style="left:109px;top:876.00px;font-weight:bold">Total</div>
<div class="c " style="left:153px;width:64.5px;text-align:right;top:876.00px;font-weight:bold;">220,000</div>
<div class="c " style="left:228px;width:64.5px;text-align:right;top:876.00px;font-weight:bold;">220,000</div>
<div class="c " style="left:303px;width:64.5px;text-align:right;top:876.00px;font-weight:bold;">220,000</div>
<div class="c " style="left:378px;width:64.5px;text-align:right;top:876.00px;font-weight:bold;">220,000</div>
<div class="c " style="left:453px;width:64.5px;text-align:right;top:876.00px;font-weight:bold;">0</div>
<div class="c " style="left:528px;width:64.5px;text-align:right;top:876.00px;font-weight:bold;">0</div>
<div class="c " style="left:603px;width:64.5px;text-align:right;top:876.00px;">-</div>
<div class="c " style="left:678px;width:64.5px;text-align:right;top:876.00px;font-weight:bold;">0</div>
<div class="c " style="left:753px;width:64.5px;text-align:right;top:876.00px;font-weight:bold;">0</div>
<div class="c " style="left:828px;width:64.5px;text-align:right;top:876.00px;font-weight:bold;">0</div>
<div class="c " style="left:903px;width:64.5px;text-align:right;top:876.00px;font-weight:bold;">0</div>
<div class="c " style="left:978px;width:78px;text-align:center;top:876.00px;">-</div>
<div class="c" style="left:1066px;top:876.00px">-</div>
<div class="abs cal" style="left:139.3px;top:315.2px;width:268.3px;height:530.0px;border:2px solid #ff0000;background:#fff;overflow:hidden">
<div class="abs" style="left:0;top:0;width:100%;height:13px;background:#1c1d21"></div>
<div class="abs" style="left:0;top:54.27px;width:100%;height:1.2px;background:#e9e9e9"></div>
<div class="c red" style="left:0px;width:131.39999999999998px;text-align:center;top:12.70px;height:43.37px;line-height:43.37px;font-size:15.7px;text-decoration-thickness:1.3px;text-decoration-color:#222">2024-11-10</div>
<div class="abs" style="left:138.09999999999997px;top:26.785000000000025px;width:15.6px;height:14.35px;border:2px solid #111;border-radius:2.34px;background:#fff"></div><div class="abs" style="left:142.62px;top:32.66px;width:6.55px;height:2.60px;background:#111"></div>
<div class="c red" style="left:165.7px;top:12.70px;height:43.37px;line-height:43.37px;font-size:13.5px;transform:scaleX(0.955);transform-origin:0 0;text-decoration-thickness:1.3px;text-decoration-color:#222">총무팀 사원</div>
<div class="abs" style="left:0;top:97.64px;width:100%;height:1.2px;background:#e9e9e9"></div>
<div class="c red" style="left:165.7px;top:56.07px;height:43.37px;line-height:43.37px;font-size:13.5px;transform:scaleX(0.955);transform-origin:0 0;text-decoration-thickness:1.3px;text-decoration-color:#222">총무팀 사원</div>
<div class="abs" style="left:0;top:140.51px;width:100%;height:1.7px;background:#c4c5ca"></div>
<div class="c red" style="left:165.7px;top:99.44px;height:43.37px;line-height:43.37px;font-size:13.5px;transform:scaleX(0.955);transform-origin:0 0;text-decoration-thickness:1.3px;text-decoration-color:#222">총무팀 사원</div>
<div class="abs" style="left:0;top:184.38px;width:100%;height:1.2px;background:#e9e9e9"></div>
<div class="c strike" style="left:0px;width:131.39999999999998px;text-align:center;top:142.81px;height:43.37px;line-height:43.37px;font-size:15.7px;text-decoration-thickness:1.3px;text-decoration-color:#222">2024-11-10</div>
<div class="abs" style="left:138.09999999999997px;top:156.895px;width:15.6px;height:14.35px;border:2px solid #111;border-radius:2.34px;background:#fff"></div><div class="abs" style="left:142.62px;top:162.77px;width:6.55px;height:2.60px;background:#111"></div>
<div class="c strike" style="left:165.7px;top:142.81px;height:43.37px;line-height:43.37px;font-size:13.5px;transform:scaleX(0.955);transform-origin:0 0;text-decoration-thickness:1.3px;text-decoration-color:#222">총무팀 사원</div>
<div class="abs" style="left:0;top:227.75px;width:100%;height:1.2px;background:#e9e9e9"></div>
<div class="c strike" style="left:165.7px;top:186.18px;height:43.37px;line-height:43.37px;font-size:13.5px;transform:scaleX(0.955);transform-origin:0 0;text-decoration-thickness:1.3px;text-decoration-color:#222">총무팀 사원</div>
<div class="abs" style="left:0;top:270.62px;width:100%;height:1.7px;background:#c4c5ca"></div>
<div class="c strike" style="left:165.7px;top:229.55px;height:43.37px;line-height:43.37px;font-size:13.5px;transform:scaleX(0.955);transform-origin:0 0;text-decoration-thickness:1.3px;text-decoration-color:#222">총무팀 사원</div>
<div class="abs" style="left:0;top:314.49px;width:100%;height:1.2px;background:#e9e9e9"></div>
<div class="c " style="left:0px;width:131.39999999999998px;text-align:center;top:272.92px;height:43.37px;line-height:43.37px;font-size:15.7px;text-decoration-thickness:1.3px;text-decoration-color:#222">2024-11-10</div>
<div class="abs" style="left:138.09999999999997px;top:287.005px;width:15.6px;height:14.35px;border:2px solid #111;border-radius:2.34px;background:#fff"></div><div class="abs" style="left:142.62px;top:292.88px;width:6.55px;height:2.60px;background:#111"></div>
<div class="c " style="left:165.7px;top:272.92px;height:43.37px;line-height:43.37px;font-size:13.5px;transform:scaleX(0.955);transform-origin:0 0;text-decoration-thickness:1.3px;text-decoration-color:#222">총무팀 사원</div>
<div class="abs" style="left:0;top:357.86px;width:100%;height:1.2px;background:#e9e9e9"></div>
<div class="c " style="left:165.7px;top:316.29px;height:43.37px;line-height:43.37px;font-size:13.5px;transform:scaleX(0.955);transform-origin:0 0;text-decoration-thickness:1.3px;text-decoration-color:#222">총무팀 사원</div>
<div class="abs" style="left:0;top:400.73px;width:100%;height:1.7px;background:#c4c5ca"></div>
<div class="c " style="left:165.7px;top:359.66px;height:43.37px;line-height:43.37px;font-size:13.5px;transform:scaleX(0.955);transform-origin:0 0;text-decoration-thickness:1.3px;text-decoration-color:#222">총무팀 사원</div>
<div class="abs" style="left:0;top:444.60px;width:100%;height:1.2px;background:#e9e9e9"></div>
<div class="c red" style="left:0px;width:131.39999999999998px;text-align:center;top:403.03px;height:43.37px;line-height:43.37px;font-size:15.7px;text-decoration-thickness:1.3px;text-decoration-color:#222">2024-11-10</div>
<div class="abs" style="left:138.09999999999997px;top:417.115px;width:15.6px;height:14.35px;border:2px solid #111;border-radius:2.34px;background:#fff"></div><div class="abs" style="left:142.62px;top:422.99px;width:6.55px;height:2.60px;background:#111"></div>
<div class="c red" style="left:165.7px;top:403.03px;height:43.37px;line-height:43.37px;font-size:13.5px;transform:scaleX(0.955);transform-origin:0 0;text-decoration-thickness:1.3px;text-decoration-color:#222">총무팀 사원</div>
<div class="abs" style="left:0;top:487.97px;width:100%;height:1.2px;background:#e9e9e9"></div>
<div class="c red" style="left:165.7px;top:446.40px;height:43.37px;line-height:43.37px;font-size:13.5px;transform:scaleX(0.955);transform-origin:0 0;text-decoration-thickness:1.3px;text-decoration-color:#222">총무팀 사원</div>
<div class="abs" style="left:0;top:530.84px;width:100%;height:1.7px;background:#c4c5ca"></div>
<div class="c red" style="left:165.7px;top:489.77px;height:43.37px;line-height:43.37px;font-size:13.5px;transform:scaleX(0.955);transform-origin:0 0;text-decoration-thickness:1.3px;text-decoration-color:#222">총무팀 사원</div>
<div class="abs" style="left:127.20px;top:96.10px;width:9.5px;height:3px;background:#fff"></div>
</div>
<div class="abs" style="left:653px;top:97.6px;width:542px;height:1.5px;background:#ff0000"></div>
<div class="abs" style="left:653px;top:97.6px;width:1.5px;height:105px;background:#ff0000"></div>
<svg class="abs" style="left:646px;top:200.5px" width="16" height="14"><path d="M1.3 0.8 L13.7 0.8 L7.5 12.8 Z" fill="#ff0000"/></svg>
<div class="abs" style="left:1138px;top:60px;width:121px;height:25px;background:#fff;box-shadow:0 0 2px rgba(0,0,0,0.25)"></div>
<div class="t" style="left:1143.4px;top:67.35px;font-size:11.6px;font-weight:700;color:#222;transform:scaleX(0.89);transform-origin:0 0;">구차트 데이터조회</div>
<svg class="abs" style="left:1242px;top:67px" width="11" height="12"><path d="M6 1 H1.5 V11 H5 M6 1 L9 4 V6 M6 1 V4 H9" fill="none" stroke="#333" stroke-width="0.9"/><circle cx="8" cy="9" r="1.9" fill="none" stroke="#333" stroke-width="0.9"/></svg>
<svg class="abs" style="left:1163px;top:30px" width="72" height="72"><ellipse cx="36" cy="35.5" rx="34" ry="33.5" fill="none" stroke="#ff0000" stroke-width="2.3" stroke-dasharray="7 4.5"/></svg>
<div class="badge" style="left:1131px;top:44.5px"><span style="display:inline-block;transform:scaleX(0.88)">1</span></div>
<div class="badge" style="left:60.2px;top:297px"><span style="display:inline-block;transform:scaleX(0.88)">2</span></div>
<div class="badge" style="left:83px;top:877px"><span style="display:inline-block;transform:scaleX(0.88)">3</span></div>
<div class="badge" style="left:142px;top:471px"><span style="display:inline-block;transform:scaleX(0.88)">4</span></div>
<div class="badge" style="left:142px;top:731px"><span style="display:inline-block;transform:scaleX(0.88)">5</span></div>
</body></html>
